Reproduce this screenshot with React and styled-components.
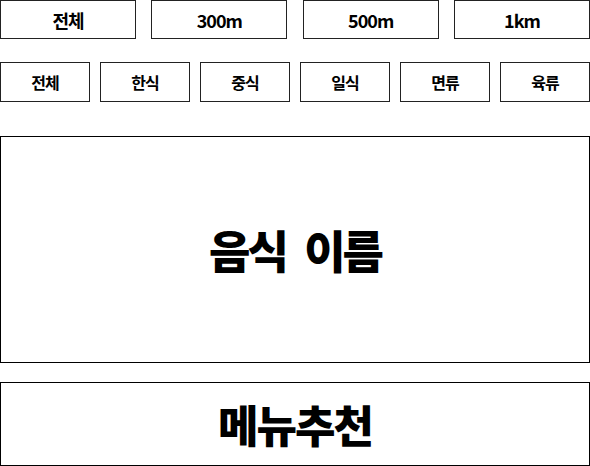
import React from "react";
import styled, { createGlobalStyle } from "styled-components";

const GlobalStyle = createGlobalStyle`
  html, body {
    margin: 0;
    padding: 0;
    background: #fff;
  }
  body {
    font-family: "Noto Sans CJK KR", "Noto Sans", sans-serif;
    color: #000;
  }
  * {
    box-sizing: border-box;
  }
`;

const Page = styled.div`
  width: 590px;
  height: 466px;
  display: flex;
  flex-direction: column;
  overflow: hidden;
`;

const Row = styled.div`
  display: flex;
  justify-content: space-between;
  margin-top: ${(p) => p.top || 0}px;
`;

const Tab = styled.button`
  width: ${(p) => p.w}px;
  height: ${(p) => p.h}px;
  border: 1px solid #222;
  background: #fff;
  padding: 0;
  display: flex;
  align-items: center;
  justify-content: center;
  font-family: inherit;
  font-weight: 700;
  font-size: ${(p) => p.size}px;
  letter-spacing: -1px;
  color: #000;
  cursor: pointer;
`;

const FoodBox = styled.div`
  margin-top: 34px;
  height: 228px;
  border: 1px solid #000;
  display: flex;
  align-items: center;
  justify-content: center;
  font-size: 45px;
  font-weight: 900;
  letter-spacing: -3px;
  word-spacing: 11px;
`;

const RecommendButton = styled.button`
  margin-top: 19px;
  height: 84px;
  width: 100%;
  border: 1px solid #000;
  background: #fff;
  padding: 0;
  display: flex;
  align-items: center;
  justify-content: center;
  font-family: inherit;
  font-size: 44px;
  font-weight: 900;
  letter-spacing: -2px;
  color: #000;
  cursor: pointer;
`;

const distances = ["전체", "300m", "500m", "1km"];
const categories = ["전체", "한식", "중식", "일식", "면류", "육류"];

export default function App() {
  return (
    <>
      <GlobalStyle />
      <Page>
        <Row>
          {distances.map((d) => (
            <Tab key={d} w={136} h={39} size={18}>
              {d}
            </Tab>
          ))}
        </Row>
        <Row top={23}>
          {categories.map((c) => (
            <Tab key={c} w={90} h={40} size={16}>
              {c}
            </Tab>
          ))}
        </Row>
        <FoodBox>음식 이름</FoodBox>
        <RecommendButton>메뉴추천</RecommendButton>
      </Page>
    </>
  );
}
